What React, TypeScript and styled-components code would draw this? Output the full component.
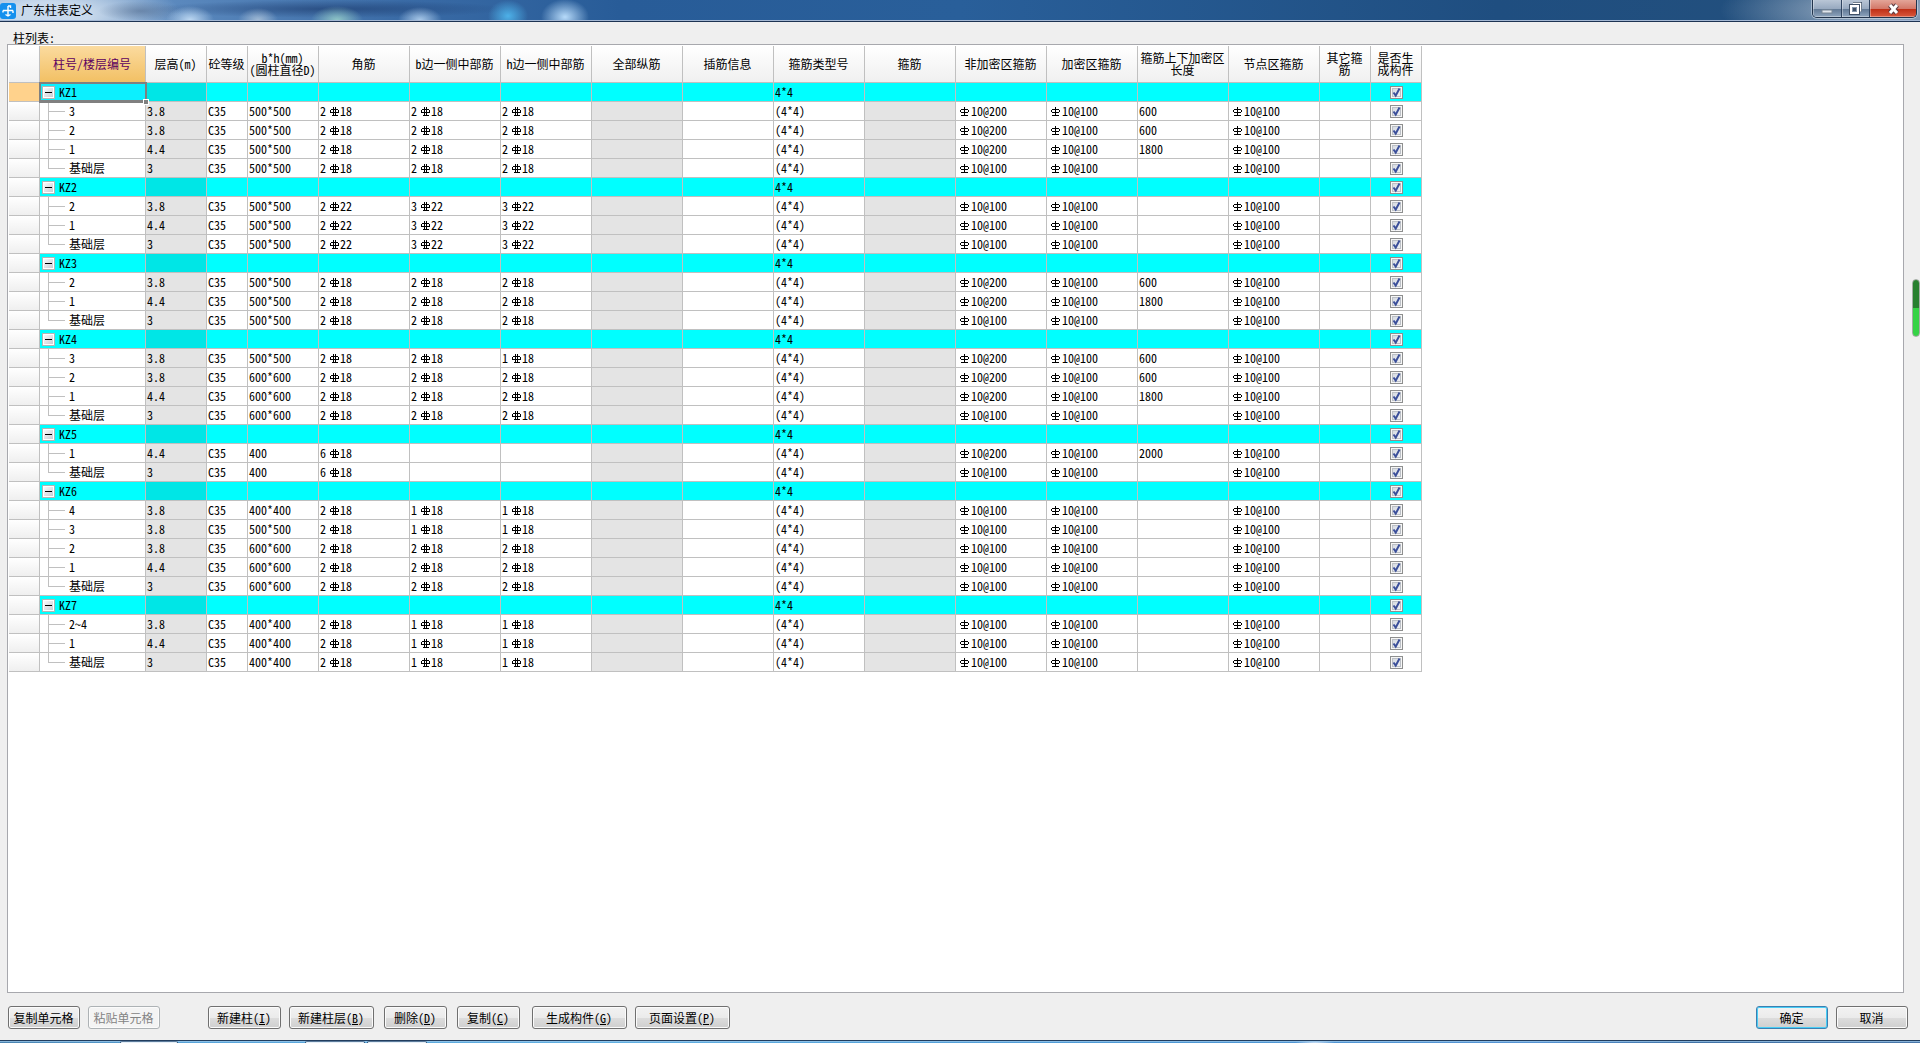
import React, { useState } from "react";
import styled, { createGlobalStyle, css } from "styled-components";

const FONT = '"Noto Sans Mono CJK SC", "Noto Sans CJK SC", monospace';
const LINE = "#c0c0c0";

const GlobalStyle = createGlobalStyle`
  *, *::before, *::after { box-sizing: border-box; }
  body {
    margin: 0;
    background: #efefef;
    color: #000;
    font: 12px/12px ${FONT};
  }
  button, input { font: inherit; color: inherit; }
`;

/* ---------- window frame ---------- */

const Window = styled.div`
  position: relative;
  display: flex;
  flex-direction: column;
  min-height: 100vh;
  overflow: hidden;
`;

const TitleBar = styled.header`
  display: flex;
  align-items: flex-start;
  height: 22px;
  padding-right: 3px;
  border-bottom: 1px solid #1d3352;
  box-shadow: inset 0 -1px 0 #a3b7d3;
  background:
    radial-gradient(ellipse 24px 14px at 190px 20px, rgba(200, 225, 248, 0.9), transparent),
    radial-gradient(ellipse 20px 12px at 258px 20px, rgba(180, 200, 220, 0.8), transparent),
    radial-gradient(ellipse 26px 14px at 337px 20px, rgba(150, 205, 200, 0.9), transparent),
    radial-gradient(ellipse 22px 13px at 420px 20px, rgba(180, 210, 240, 0.9), transparent),
    radial-gradient(ellipse 20px 16px at 508px 16px, rgba(80, 185, 240, 0.9), transparent),
    radial-gradient(ellipse 24px 18px at 565px 17px, rgba(190, 225, 255, 0.95), transparent),
    radial-gradient(ellipse 42px 10px at 140px 11px, rgba(70, 95, 130, 0.5), transparent),
    radial-gradient(ellipse 180px 9px at 330px 9px, rgba(25, 55, 105, 0.6), transparent),
    radial-gradient(ellipse 130px 40px at 50px 14px, rgba(205, 221, 238, 0.95) 30%, transparent),
    radial-gradient(ellipse 160px 40px at 1880px 10px, rgba(185, 198, 214, 0.9), transparent),
    linear-gradient(90deg, #7fa3cc 0, #5a88bd 180px, #3a6ba6 400px, #285c98 620px, #295f9a 50%, #1f4e80 78%, #24507c 100%);
`;

const AppIcon = styled.svg`
  flex: none;
  width: 16px;
  height: 16px;
  margin-top: 3px;
`;

const Title = styled.h1`
  flex: 1;
  margin: 0 0 0 5px;
  font: 12px/20px "Noto Sans CJK SC", sans-serif;
`;

const Controls = styled.div`
  display: flex;
  height: 18px;
  border: 1px solid #22344c;
  border-top: 0;
  border-radius: 0 0 5px 5px;
  box-shadow: 0 0 0 1px rgba(225, 235, 245, 0.5);
  overflow: hidden;
`;

const ControlButton = styled.button<{ $close?: boolean }>`
  display: flex;
  align-items: center;
  justify-content: center;
  width: ${(p) => (p.$close ? 47 : 28)}px;
  padding: 0;
  border: 0;
  box-shadow: inset 0 -1px 0 rgba(255, 255, 255, 0.35), inset 1px 0 0 rgba(255, 255, 255, 0.35);
  background: ${(p) =>
    p.$close
      ? "linear-gradient(#e3a598 0, #d3796a 50%, #bd2d14 51%, #d9583c 100%)"
      : "linear-gradient(#b9c6d6 0, #98aac0 50%, #5f7793 51%, #8ea4bd 100%)"};
  & + & { border-left: 1px solid #2f4460; }
`;

const PanelLabel = styled.h2`
  margin: 0;
  padding: 10px 13px 0;
  height: 22px;
  font: 12px/12px ${FONT};
`;

const Panel = styled.main`
  flex: 1;
  margin: 0 16px 0 7px;
  padding: 1px;
  border: 1px solid #a7a8ad;
  background: #fff;
`;

/* ---------- table ---------- */

const Table = styled.table`
  table-layout: fixed;
  width: 1413px;
  border-collapse: separate;
  border-spacing: 0;
`;

const cell = css`
  padding: 0 1px;
  border-right: 1px solid ${LINE};
  border-bottom: 1px solid ${LINE};
  white-space: nowrap;
`;

const HeadCell = styled.th<{ $active?: boolean }>`
  ${cell}
  height: 37px;
  padding: 0 1px 0 0;
  font-weight: 400;
  line-height: 12px;
  color: ${(p) => (p.$active ? "#5c0060" : "#000")};
  background: ${(p) =>
    p.$active ? "linear-gradient(#fbdb9f, #f2c064)" : "linear-gradient(#fff, #f0f0f0)"};
`;

const Row = styled.tr<{ $group?: boolean }>`
  height: 19px;
  background: ${(p) => (p.$group ? "#00ffff" : "#fff")};
`;

const RowHead = styled.th<{ $active?: boolean }>`
  ${cell}
  background: ${(p) => (p.$active ? "#ffd28c" : "linear-gradient(#fff, #efefef)")};
`;

const Cell = styled.td<{ $shade?: "grey" | "cyan"; $center?: boolean }>`
  ${cell}
  text-align: ${(p) => (p.$center ? "center" : "left")};
  background: ${(p) => (p.$shade === "grey" ? "#e4e4e4" : p.$shade === "cyan" ? "#00e6e6" : "transparent")};
`;

const NameCell = styled.th<{ $active?: boolean }>`
  ${cell}
  position: relative;
  padding: 0;
  font-weight: 400;
  text-align: left;
  background: ${(p) => (p.$active ? "#0cf0ff" : "transparent")};
`;

const GroupName = styled.div`
  display: flex;
  align-items: center;
  gap: 4px;
  height: 18px;
  padding-left: 2px;
`;

const LevelName = styled.div`
  display: flex;
  align-items: center;
  gap: 4px;
  height: 18px;
  padding-left: 8px;
`;

const Branch = styled.svg`
  flex: none;
  align-self: flex-start;
  width: 17px;
  height: 19px;
  margin-bottom: -1px;
  overflow: visible;
`;

const Expander = styled.button`
  display: flex;
  align-items: center;
  justify-content: center;
  width: 13px;
  height: 13px;
  padding: 0;
  border: 1px solid #b4b4b4;
  outline: 0;
  box-shadow: inset 0 0 0 1px #fff;
  background: linear-gradient(135deg, #fff, #c4c8d0);
  &::before { content: ""; width: 7px; height: 1px; background: #000; }
`;

const Selection = styled.span`
  position: absolute;
  z-index: 1;
  inset: -1px -2px -2px -1px;
  border: 2px solid #808080;
  border-bottom-width: 3px;
  pointer-events: none;
  &::after {
    content: "";
    position: absolute;
    right: -4px;
    bottom: -5px;
    width: 6px;
    height: 6px;
    border: 1px solid #fff;
    background: #808080;
  }
`;

const BarText = styled.span`
  display: flex;
  align-items: center;
`;

const BarIcon = styled.svg`
  flex: none;
  width: 14px;
  height: 9px;
`;

const Check = styled.label`
  position: relative;
  display: inline-block;
  width: 13px;
  height: 13px;
  vertical-align: top;
  margin-top: 1px;
  input {
    appearance: none;
    display: block;
    width: 13px;
    height: 13px;
    margin: 0;
    border: 1px solid #8e8f8f;
    box-shadow: inset 0 0 0 1px #f6f6f6, inset 0 0 0 2px #bcc0c6;
    background: linear-gradient(135deg, #cfd4dc, #f6f7f9);
  }
  svg {
    position: absolute;
    inset: 0;
    width: 13px;
    height: 13px;
    pointer-events: none;
    visibility: hidden;
  }
  input:checked + svg { visibility: visible; }
`;

/* ---------- footer ---------- */

const Footer = styled.footer`
  display: flex;
  height: 47px;
  padding: 13px 12px 11px 8px;
`;

const Button = styled.button<{ $w: number; $before?: number; $primary?: boolean }>`
  width: ${(p) => p.$w}px;
  height: 23px;
  margin-left: ${(p) => p.$before ?? 0}px;
  padding: 0 1px 0 0;
  border: 1px solid ${(p) => (p.$primary ? "#3c7fb1" : "#707070")};
  border-radius: 3px;
  box-shadow: ${(p) => (p.$primary ? "inset 0 0 0 1px #48cdf5" : "inset 0 0 0 1px #fbfbfb")};
  background: linear-gradient(#f2f2f2 0, #ebebeb 50%, #dddddd 51%, #cfcfcf 100%);
  white-space: nowrap;
  &:disabled {
    border-color: #adb2b5;
    background: #f4f4f4;
    color: #838383;
  }
`;

const Spacer = styled.div`
  flex: 1;
`;

const Taskbar = styled.div`
  display: flex;
  height: 3px;
  padding-left: 120px;
  border-top: 1px solid #213d5e;
  background:
    linear-gradient(#a5cdec, transparent 2px),
    radial-gradient(ellipse 20px 3px at 1315px 2px, #d8e6fa, transparent),
    linear-gradient(90deg, #2a6a9c, #3f97d4 10%, #4aa5dd 32%, #2f86cc 60%, #3a7fca 80%, #1f5590 88%, #2a5a94);
`;

const Task = styled.span<{ $w: number; $before?: number }>`
  width: ${(p) => p.$w}px;
  margin-left: ${(p) => p.$before ?? 0}px;
  border: 1px solid #2b4a6b;
  border-bottom: 0;
  border-top-color: #5d7c9c;
  border-radius: 2px 2px 0 0;
  background: #e4eef7;
`;

const SideMeter = styled.div`
  position: absolute;
  top: 279px;
  right: 0;
  width: 8px;
  height: 58px;
  border: 1px solid #a3aba3;
  border-radius: 4px;
  background: linear-gradient(#28802f 50%, #35d345 50%);
`;

/* ---------- data ---------- */

type Level = {
  name: string;
  height: string;
  size: string;
  corner: string;
  b: string;
  h: string;
  pitch: string;
  length: string;
};

const lv = (
  name: string, height: string, size: string,
  corner: string, b: string, h: string, pitch = "100", length = ""
): Level => ({ name, height, size, corner, b, h, pitch, length });

const BASE = "基础层";

const groups: { name: string; levels: Level[] }[] = [
  { name: "KZ1", levels: [
    lv("3", "3.8", "500*500", "2/18", "2/18", "2/18", "200", "600"),
    lv("2", "3.8", "500*500", "2/18", "2/18", "2/18", "200", "600"),
    lv("1", "4.4", "500*500", "2/18", "2/18", "2/18", "200", "1800"),
    lv(BASE, "3", "500*500", "2/18", "2/18", "2/18"),
  ] },
  { name: "KZ2", levels: [
    lv("2", "3.8", "500*500", "2/22", "3/22", "3/22"),
    lv("1", "4.4", "500*500", "2/22", "3/22", "3/22"),
    lv(BASE, "3", "500*500", "2/22", "3/22", "3/22"),
  ] },
  { name: "KZ3", levels: [
    lv("2", "3.8", "500*500", "2/18", "2/18", "2/18", "200", "600"),
    lv("1", "4.4", "500*500", "2/18", "2/18", "2/18", "200", "1800"),
    lv(BASE, "3", "500*500", "2/18", "2/18", "2/18"),
  ] },
  { name: "KZ4", levels: [
    lv("3", "3.8", "500*500", "2/18", "2/18", "1/18", "200", "600"),
    lv("2", "3.8", "600*600", "2/18", "2/18", "2/18", "200", "600"),
    lv("1", "4.4", "600*600", "2/18", "2/18", "2/18", "200", "1800"),
    lv(BASE, "3", "600*600", "2/18", "2/18", "2/18"),
  ] },
  { name: "KZ5", levels: [
    lv("1", "4.4", "400", "6/18", "", "", "200", "2000"),
    lv(BASE, "3", "400", "6/18", "", ""),
  ] },
  { name: "KZ6", levels: [
    lv("4", "3.8", "400*400", "2/18", "1/18", "1/18"),
    lv("3", "3.8", "500*500", "2/18", "1/18", "1/18"),
    lv("2", "3.8", "600*600", "2/18", "2/18", "2/18"),
    lv("1", "4.4", "600*600", "2/18", "2/18", "2/18"),
    lv(BASE, "3", "600*600", "2/18", "2/18", "2/18"),
  ] },
  { name: "KZ7", levels: [
    lv("2~4", "3.8", "400*400", "2/18", "1/18", "1/18"),
    lv("1", "4.4", "400*400", "2/18", "1/18", "1/18"),
    lv(BASE, "3", "400*400", "2/18", "1/18", "1/18"),
  ] },
];

const columns: [string, number][] = [
  ["柱号/楼层编号", 106], ["层高(m)", 61], ["砼等级", 41], ["b*h(mm)\n(圆柱直径D)", 71],
  ["角筋", 91], ["b边一侧中部筋", 91], ["h边一侧中部筋", 91], ["全部纵筋", 91],
  ["插筋信息", 91], ["箍筋类型号", 91], ["箍筋", 91], ["非加密区箍筋", 91],
  ["加密区箍筋", 91], ["箍筋上下加密区\n长度", 91], ["节点区箍筋", 91],
  ["其它箍\n筋", 51], ["是否生\n成构件", 51],
];

/* ---------- parts ---------- */

/* Longitudinal bars: count, double-stroke grade sign, diameter. */
function MainBar({ value }: { value: string }) {
  if (!value) return null;
  const [count, size] = value.split("/");
  return (
    <BarText>
      {count}
      <BarIcon viewBox="0 0 14 9" fill="none" stroke="#000">
        <path d="M5 2.5H12M4.5 3v2M12.5 3v2M4 5.5H13M6 8.5H12M7.5 0V9M9.5 0V9" shapeRendering="crispEdges" />
      </BarIcon>
      {size}
    </BarText>
  );
}

/* Stirrups: grade sign, diameter and spacing. */
function Stirrup({ pitch }: { pitch: string }) {
  return (
    <BarText>
      <BarIcon viewBox="0 0 14 9" fill="none" stroke="#000">
        <path d="M4 2.5H11M3.5 3v2M11.5 3v2M4 5.5H11M4 8.5H11M7.5 0V9" shapeRendering="crispEdges" />
      </BarIcon>
      10@{pitch}
    </BarText>
  );
}

function CheckBox({ label }: { label: string }) {
  return (
    <Check>
      <input type="checkbox" defaultChecked aria-label={label} />
      <svg viewBox="0 0 13 13" fill="none" stroke="#3b4f9a" strokeWidth="2">
        <path d="M3.5 6.5L5.7 9.6L9.5 2.5" />
      </svg>
    </Check>
  );
}

function LevelRow({ group, level, last }: { group: string; level: Level; last: boolean }) {
  return (
    <Row>
      <RowHead />
      <NameCell scope="row">
        <LevelName>
          <Branch viewBox="0 0 17 19" stroke={LINE} shapeRendering="crispEdges">
            <path d={last ? "M0.5 0V9.5H17" : "M0.5 0V19M0 9.5H17"} fill="none" />
          </Branch>
          {level.name}
        </LevelName>
      </NameCell>
      <Cell $shade="grey">{level.height}</Cell>
      <Cell>C35</Cell>
      <Cell>{level.size}</Cell>
      <Cell><MainBar value={level.corner} /></Cell>
      <Cell><MainBar value={level.b} /></Cell>
      <Cell><MainBar value={level.h} /></Cell>
      <Cell $shade="grey" />
      <Cell />
      <Cell>(4*4)</Cell>
      <Cell $shade="grey" />
      <Cell><Stirrup pitch={level.pitch} /></Cell>
      <Cell><Stirrup pitch="100" /></Cell>
      <Cell>{level.length}</Cell>
      <Cell><Stirrup pitch="100" /></Cell>
      <Cell />
      <Cell $center><CheckBox label={`${group} ${level.name}`} /></Cell>
    </Row>
  );
}

function Group({ name, levels, active }: { name: string; levels: Level[]; active: boolean }) {
  const [open, setOpen] = useState(true);
  return (
    <tbody>
      <Row $group>
        <RowHead $active={active} />
        <NameCell scope="row" $active={active}>
          <GroupName>
            <Expander type="button" aria-label={name} aria-expanded={open} onClick={() => setOpen(!open)} />
            {name}
          </GroupName>
          {active && <Selection />}
        </NameCell>
        <Cell $shade="cyan" />
        {Array.from({ length: 7 }, (_, i) => <Cell key={i} />)}
        <Cell>4*4</Cell>
        {Array.from({ length: 6 }, (_, i) => <Cell key={i} />)}
        <Cell $center><CheckBox label={name} /></Cell>
      </Row>
      {open && levels.map((level, i) => (
        <LevelRow key={level.name} group={name} level={level} last={i === levels.length - 1} />
      ))}
    </tbody>
  );
}

export default function App() {
  return (
    <Window>
      <GlobalStyle />
      <TitleBar>
        <AppIcon viewBox="0 0 16 16" fill="none">
          <rect width="16" height="16" rx="3" fill="#1590ee" />
          <path d="M8 3v10M3 7.500h10M8 3h2.500v2M3 7.500v2M13 7.500v2.500M5.500 11.500L8 13l2.500-1.500" stroke="#fff" strokeWidth="1.400" />
        </AppIcon>
        <Title>广东柱表定义</Title>
        <Controls>
          <ControlButton type="button" aria-label="最小化">
            <svg width="12" height="12"><rect x="1" y="7" width="10" height="3" fill="#dfe5ec" stroke="#7a8796" /></svg>
          </ControlButton>
          <ControlButton type="button" aria-label="还原">
            <svg width="13" height="13" fill="none">
              <path d="M4 1.500h7.500v8" stroke="#3f5066" strokeWidth="3" />
              <path d="M4 1.500h7.500v8" stroke="#fff" strokeWidth="1.500" />
              <rect x="2" y="4" width="7" height="7" stroke="#3f5066" strokeWidth="4" />
              <rect x="2" y="4" width="7" height="7" fill="#8496ab" stroke="#fff" strokeWidth="2" />
              <rect x="4" y="6" width="3" height="3" fill="#3f5066" />
            </svg>
          </ControlButton>
          <ControlButton type="button" $close aria-label="关闭">
            <svg width="13" height="12" fill="none">
              <path d="M3 2l7 8M10 2l-7 8" stroke="#5a3a40" strokeWidth="5" />
              <path d="M3 2l7 8M10 2l-7 8" stroke="#fff" strokeWidth="3" />
            </svg>
          </ControlButton>
        </Controls>
      </TitleBar>
      <PanelLabel>柱列表:</PanelLabel>
      <Panel>
        <Table>
          <colgroup>
            <col style={{ width: 31 }} />
            {columns.map(([title, width]) => <col key={title} style={{ width }} />)}
          </colgroup>
          <thead>
            <tr>
              <HeadCell />
              {columns.map(([title], i) => (
                <HeadCell key={title} scope="col" $active={i === 0}>
                  {title.split("\n").map((line) => <div key={line}>{line}</div>)}
                </HeadCell>
              ))}
            </tr>
          </thead>
          {groups.map((g, i) => <Group key={g.name} {...g} active={i === 0} />)}
        </Table>
      </Panel>
      <Footer>
        <Button type="button" $w={72}>复制单元格</Button>
        <Button type="button" $w={72} $before={8} disabled>粘贴单元格</Button>
        <Button type="button" $w={73} $before={48}>新建柱(<u>I</u>)</Button>
        <Button type="button" $w={85} $before={8}>新建柱层(<u>B</u>)</Button>
        <Button type="button" $w={63} $before={10}>删除(<u>D</u>)</Button>
        <Button type="button" $w={63} $before={10}>复制(<u>C</u>)</Button>
        <Button type="button" $w={95} $before={12}>生成构件(<u>G</u>)</Button>
        <Button type="button" $w={95} $before={8}>页面设置(<u>P</u>)</Button>
        <Spacer />
        <Button type="button" $w={72} $primary>确定</Button>
        <Button type="button" $w={72} $before={8}>取消</Button>
      </Footer>
      <Taskbar>
        <Task $w={58} />
        <Task $w={60} $before={127} />
        <Task $w={60} $before={2} />
      </Taskbar>
      <SideMeter />
    </Window>
  );
}
